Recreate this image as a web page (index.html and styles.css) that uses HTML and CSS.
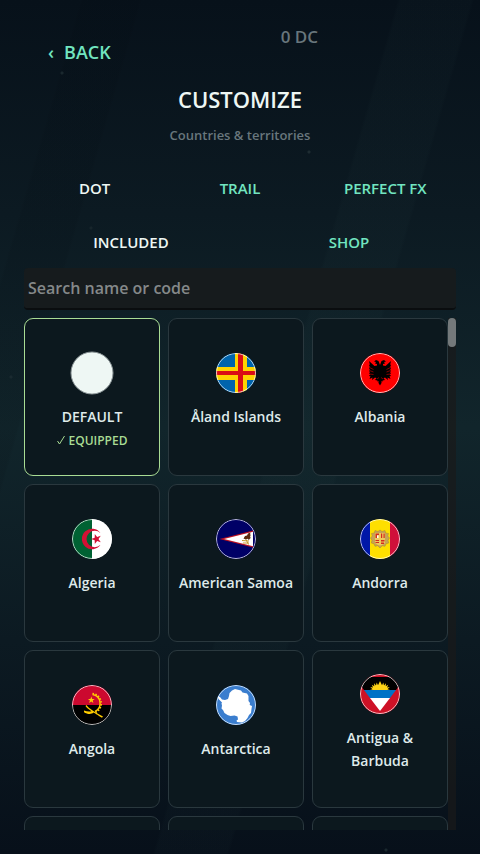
FILE: index.html
```html
<!DOCTYPE html>
<html lang="en">
<head>
  <meta charset="UTF-8" />
  <meta name="viewport" content="width=device-width,initial-scale=1" />
  <title>Customize</title>
  <link rel="stylesheet" href="styles.css">
</head>
<body>
  <main class="screen">
    <header class="topbar">
      <button class="back" type="button"><span>‹</span><span>BACK</span></button>
      <p class="balance">0 DC</p>
    </header>

    <h1>CUSTOMIZE</h1>
    <p class="subtitle">Countries &amp; territories</p>

    <nav class="tabs">
      <button class="tab active" type="button">DOT</button>
      <button class="tab" type="button">TRAIL</button>
      <button class="tab" type="button">PERFECT FX</button>
    </nav>
    <nav class="tabs">
      <button class="tab active" type="button">INCLUDED</button>
      <button class="tab" type="button">SHOP</button>
    </nav>

    <input class="search" type="text" placeholder="Search name or code" aria-label="Search name or code" />

    <div class="browser">
      <div class="grid">
        <button class="card selected" type="button">
          <svg class="flag disc" viewBox="0 0 40 40"><circle cx="20" cy="20" r="21" fill="#eef7f4" stroke="#8b9597" stroke-width="1"/></svg>
          <span class="name">DEFAULT</span>
          <span class="status"><svg class="check" viewBox="0 0 8 10"><path d="M.5 6 2.5 9 7.5 1" fill="none" stroke="currentColor"/></svg>EQUIPPED</span>
        </button>

        <button class="card" type="button">
          <svg class="flag" viewBox="0 0 40 40">
            <path fill="#0064ad" d="M0 0h40v40H0z"/>
            <path fill="#ffd300" d="M19 0h12v14h9v13h-9v13H19V27H0V14h19z"/>
            <path fill="#da0e15" d="M22 0h5v18h13v4H27v18h-5V22H0v-4h22z"/>
            <circle class="ring" cx="20" cy="20" r="19.5"/>
          </svg>
          <span class="name">Åland Islands</span>
          <span class="status"></span>
        </button>

        <button class="card" type="button">
          <svg class="flag" viewBox="0 0 40 40">
            <path fill="#f00" d="M0 0h40v40H0z"/>
            <path d="M20 12 18.500 8 16 7 14 8.500l2 .5-1 1.500 2 .5v1.500L14.500 13 9 8l.8 3.500L9 12l.8 2L9 15l.8 1.500L9 18l1 1-1 1.500 1.200.8L9 23l1.500.3L9.500 26l3-1.500-.5 2.500 3-2.500 1.500.8L15 27l2.500.5-.5 1 1.500-.5v2L20 32.500l1.500-2.500v-2l1.500.5-.5-1L25 27l-1.500-1.700 1.500-.8 3 2.500-.5-2.500 3 1.500-1-2.700L31 23l-1.200-1.700 1.200-.8-1-1.500 1-1-.8-1.500L31 15l-.8-1 .8-2-.8-.5L31 8l-5.500 5-2.500-.5V11l2-.5-1-1.500 2-.5L24 7l-2.500 1z"/>
            <path fill="none" stroke="#f00" stroke-width=".5" d="m9.500 14.500 4 2m-4 1 4 1.500m-4 2 4 .5m17-7-4 2m4 1-4 1.500m4 2-4 .5M17 26l2-1.500m4 1.500-2-1.500"/>
            <circle class="ring" cx="20" cy="20" r="19.5"/>
          </svg>
          <span class="name">Albania</span>
          <span class="status"></span>
        </button>

        <button class="card" type="button">
          <svg class="flag" viewBox="0 0 40 40">
            <path fill="#006233" d="M0 0h20v40H0z"/>
            <path fill="#fff" d="M20 0h20v40H20z"/>
            <path fill="#d21034" d="M28.500 14.200a10.200 10.200 0 1 0 0 11.600 8.200 8.200 0 1 1 0-11.600z"/>
            <path fill="#d21034" d="m19 20 3.700-1.200.1-3.900 2.300 3.100 3.700-1.200-2.300 3.200 2.300 3.200-3.700-1.200-2.300 3.100-.1-3.900z"/>
            <circle class="ring" cx="20" cy="20" r="19.5"/>
          </svg>
          <span class="name">Algeria</span>
          <span class="status"></span>
        </button>

        <button class="card" type="button">
          <svg class="flag" viewBox="0 0 40 40">
            <path fill="#000066" d="M0 0h40v40H0z"/>
            <path fill="#bd1021" d="M3.500 20 37 11.500v17z"/>
            <path fill="#fff" d="M8 20 37 12.800v14.400z"/>
            <path fill="#5c2a10" d="m27.500 19.500 1.500-2.500 2-.5 1-2 2.500-1-.5 2 1.300.5-1.300.7.600 2.300-1.800 2-1-1.300-2 .8z"/>
            <path fill="none" stroke="#c59a2c" d="m26 21.500 7 .5M27 24h6m-3-3.500 2.500 5"/>
            <circle class="ring" cx="20" cy="20" r="19.5"/>
          </svg>
          <span class="name">American Samoa</span>
          <span class="status"></span>
        </button>

        <button class="card" type="button">
          <svg class="flag" viewBox="0 0 40 40">
            <path fill="#0018a8" d="M0 0h10v40H0z"/>
            <path fill="#fedf00" d="M10 0h20v40H10z"/>
            <path fill="#d0103a" d="M30 0h10v40H30z"/>
            <path fill="#c6a455" stroke="#a98536" stroke-width=".5" d="m20 11 2 1.500 3-1 .7 2.500 2.800.5-.8 2.500 1.800 2-1.500 2.200.7 2.800-2.700.8-1 2.500-2.800-.6L20 29l-2.200-2.300-2.800.6-1-2.500-2.700-.8.700-2.800-1.500-2.200 1.800-2-.8-2.500 2.800-.5.700-2.500 3 1z"/>
            <path fill="#eec95b" d="M15 14h10v9c0 2-3 3-5 3.500-2-.5-5-1.500-5-3.500z"/>
            <path fill="#d52b1e" d="M15.500 14.500H19v1.500h-2v3h-1.500zM21 14.500h1.200V19H21zm2.500 0h1.200V19h-1.200zM15.500 21H19v1h-3.500zm0 2H19v1h-3.500zM21 21h3.500v1.500H21zm0 2.500h3V25h-3z"/>
            <path fill="#fff" d="M17 16.500h1.500V19H17z"/>
            <circle class="ring" cx="20" cy="20" r="19.5"/>
          </svg>
          <span class="name">Andorra</span>
          <span class="status"></span>
        </button>

        <button class="card" type="button">
          <svg class="flag" viewBox="0 0 40 40">
            <path fill="#cc092f" d="M0 0h40v20H0z"/>
            <path d="M0 20h40v20H0z"/>
            <path fill="none" stroke="#ffcb00" stroke-width="1.500" d="M20.500 9.500a9 9 0 0 1 2.500 17"/>
            <path fill="none" stroke="#ffcb00" stroke-width="1.500" stroke-dasharray="1.500 1.500" d="M20.500 8.500a10 10 0 0 1 3 19"/>
            <path fill="#ffcb00" d="m19.300 11.500.9 2.400 2.500.1-2 1.500.7 2.500-2.100-1.500-2.200 1.500.8-2.500-2-1.500 2.500-.1zM14.500 20c2 3.500 9 7.500 16.500 11.500l-1 1.200c-5-3-7.500-4.700-8.500-5.200-2 2-6 2-9.500-.3v-1.700c2.500 1 5.500 1.400 7.500.7-3-2-5-3.700-6-5.200z"/>
            <circle class="ring" cx="20" cy="20" r="19.5"/>
          </svg>
          <span class="name">Angola</span>
          <span class="status"></span>
        </button>

        <button class="card" type="button">
          <svg class="flag" viewBox="0 0 40 40">
            <path fill="#3a7dce" d="M0 0h40v40H0z"/>
            <path fill="#fff" d="M1.500 11 4 12l2 2.500 3 .5 3-1 1-3 .5-3L16 5.500 19 4l4 1 2 .500 1.500 2L31 8.500l1.500 2.500v5l1.500 2-.3 2L36 21l-.5 3-.5 4-2 2-1.500 3-2.500 3-3 1.500-5-.5-.5-1.500 1.500-1-.5-3-3-1-4 .5-3-1-3-2-1.500-3-1.500-1.500.5-3-.5-2L6 17.500 2.500 14z"/>
            <circle class="ring" cx="20" cy="20" r="19.5"/>
          </svg>
          <span class="name">Antarctica</span>
          <span class="status"></span>
        </button>

        <button class="card" type="button">
          <svg class="flag" viewBox="0 0 40 40">
            <path fill="#ce1126" d="M0 0h40v40H0z"/>
            <path d="M-6 3h52L36 16H4z"/>
            <path fill="#fcd116" d="m10 16 2.500-.8-2.200-2.200 2.700.5-1.200-2.800 2.500 1.500-.3-3 2 2.300.7-3 1.300 2.700 2-4.200 2 4.200L23.300 8.500l.7 3 2-2.300-.3 3 2.500-1.500-1.200 2.800 2.700-.5-2.200 2.200L30 16z"/>
            <path fill="#0072c6" d="M4 16h32l-6 8H10z"/>
            <path fill="#fff" d="M10 24h20L20 37z"/>
            <circle class="ring" cx="20" cy="20" r="19.5"/>
          </svg>
          <span class="name">Antigua &amp; Barbuda</span>
          <span class="status"></span>
        </button>

        <!-- next row, scrolled out of view -->
        <button class="card" type="button" aria-label="Argentina"></button>
        <button class="card" type="button" aria-label="Armenia"></button>
        <button class="card" type="button" aria-label="Aruba"></button>
      </div>
      <div class="track"><div class="thumb"></div></div>
    </div>
  </main>
</body>
</html>
```
FILE: styles.css
```css
* { box-sizing: border-box; }

body {
  margin: 0;
  color: #eef7f4;
  font-family: "Open Sans", "Noto Sans", sans-serif;
  font-weight: 600;
  background:
    radial-gradient(circle at 62px 73px, #1a282e 1px, transparent 2px),
    radial-gradient(circle at 309px 152px, #1e2c32 1px, transparent 2px),
    radial-gradient(circle at 91px 228px, #17252b 1px, transparent 2px),
    radial-gradient(circle at 11px 377px, #1a2a30 1px, transparent 2px),
    radial-gradient(circle at 386px 850px, #1a282e 1px, transparent 2px),
    linear-gradient(106deg, transparent 77px, rgba(0, 4, 10, 0.08) 80px 134px, transparent 137px 382px, rgba(120, 180, 170, 0.02) 385px 453px, transparent 456px),
    linear-gradient(#07111a, #0c1a22 25%, #11252b 50%, #0c1a22 75%, #07101a);
}

h1, p { margin: 0; }

button {
  padding: 0;
  border: none;
  background: none;
  color: #72e5c0;
  font: inherit;
  cursor: pointer;
}

.screen {
  display: flex;
  flex-direction: column;
  height: 100vh;
  padding: 24px;
}

.topbar { display: flex; align-items: flex-start; gap: 8px; }
.back {
  display: flex;
  align-items: center;
  gap: 10px;
  height: 56px;
  padding: 0 24px;
  font-size: 18px;
}
.balance { flex: 1; color: #68767c; font-size: 17px; line-height: 26px; text-align: center; }

h1 { margin-top: 4px; font-size: 22px; font-weight: 600; line-height: 30px; text-align: center; }
.subtitle { margin-top: 12px; color: #68767c; font-size: 13px; line-height: 18px; text-align: center; }

.tabs { display: flex; gap: 4px; margin-top: 6px; }
.subtitle + .tabs { margin-top: 20px; }
.tab { flex: 1; height: 48px; font-size: 15px; }
.tab.active { color: #eef7f4; }

.search {
  width: 100%;
  height: 42px;
  margin-top: 2px;
  padding: 0 4px;
  border: none;
  border-bottom: 2px solid #0a0d0f;
  border-radius: 4px;
  background: #161b1d;
  color: #eef7f4;
  font: inherit;
  font-size: 16px;
}
.search::placeholder { color: #85898a; opacity: 1; }

.browser { display: flex; flex: 1; min-height: 0; margin-top: 8px; }
.grid {
  display: grid;
  flex: 1;
  grid-template-columns: repeat(3, 1fr);
  grid-auto-rows: 158px;
  gap: 8px;
  overflow-y: auto;
  scrollbar-width: none;
}

.card {
  display: flex;
  flex-direction: column;
  align-items: center;
  justify-content: center;
  padding: 8px 8px 0;
  border: 1px solid #2a383e;
  border-radius: 9px;
  background: #0c181e;
  color: #dfeaea;
}
.card.selected { border-color: #a9dc94; }

.flag { flex: none; width: 40px; height: 40px; border-radius: 50%; }
.flag.disc { overflow: visible; border-radius: 0; }
.ring { fill: none; stroke: #fff; stroke-opacity: 0.75; }

.name { margin-top: 12px; font-size: 14px; line-height: 23px; }
.status {
  display: flex;
  align-items: center;
  gap: 4px;
  height: 18px;
  margin-top: 3px;
  color: #a9dc94;
  font-size: 12px;
}
.check { width: 8px; height: 10px; }

.track { width: 8px; background: rgba(26, 26, 26, 0.7); }
.thumb { height: 29px; border-radius: 4px; background: #74797b; }
```
